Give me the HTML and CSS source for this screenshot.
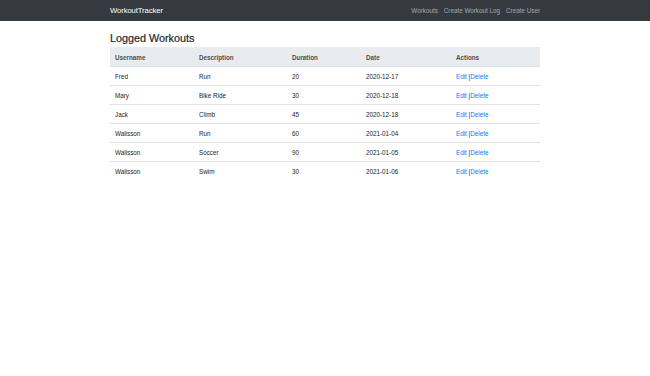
FILE: index.html
```html
<!DOCTYPE html>
<html>
<head>
<meta charset="utf-8">
<link rel="stylesheet" href="styles.css">
</head>
<body>
<nav class="navbar">
  <div class="container nav-inner">
    <a class="brand" href="#">WorkoutTracker</a>
    <ul class="nav-links">
      <li><a href="#">Workouts</a></li>
      <li><a href="#">Create Workout Log</a></li>
      <li><a href="#">Create User</a></li>
    </ul>
  </div>
</nav>
<main class="container content">
  <h3 class="title">Logged Workouts</h3>
  <table class="table">
    <colgroup>
      <col class="c1"><col class="c2"><col class="c3"><col class="c4"><col class="c5">
    </colgroup>
    <thead>
      <tr><th>Username</th><th>Description</th><th>Duration</th><th>Date</th><th>Actions</th></tr>
    </thead>
    <tbody>
      <tr><td>Fred</td><td>Run</td><td>20</td><td>2020-12-17</td><td><a href="#">Edit</a> |<a href="#">Delete</a></td></tr>
      <tr><td>Mary</td><td>Bike Ride</td><td>30</td><td>2020-12-18</td><td><a href="#">Edit</a> |<a href="#">Delete</a></td></tr>
      <tr><td>Jack</td><td>Climb</td><td>45</td><td>2020-12-18</td><td><a href="#">Edit</a> |<a href="#">Delete</a></td></tr>
      <tr><td>Walisson</td><td>Run</td><td>60</td><td>2021-01-04</td><td><a href="#">Edit</a> |<a href="#">Delete</a></td></tr>
      <tr><td>Walisson</td><td>Soccer</td><td>90</td><td>2021-01-05</td><td><a href="#">Edit</a> |<a href="#">Delete</a></td></tr>
      <tr><td>Walisson</td><td>Swim</td><td>30</td><td>2021-01-06</td><td><a href="#">Edit</a> |<a href="#">Delete</a></td></tr>
    </tbody>
  </table>
</main>
</body>
</html>
```
FILE: styles.css
```css
* { box-sizing: border-box; }
html, body { margin: 0; padding: 0; }
body {
  font-family: "Liberation Sans", Arial, sans-serif;
  font-size: 6.3px;
  line-height: 1.5;
  color: #212529;
  background: #fff;
}
.container {
  width: 430px;
  margin: 0 auto;
}
.navbar {
  background: #343a40;
  height: 21px;
}
.nav-inner {
  height: 21px;
  display: flex;
  align-items: center;
  justify-content: space-between;
}
.brand {
  color: #fff;
  text-decoration: none;
  font-size: 7.7px;
  letter-spacing: -0.1px;
}
.nav-links {
  list-style: none;
  margin: 0;
  padding: 0;
  display: flex;
  margin-right: -3px;
}
.nav-links a {
  display: block;
  padding: 0 3px;
  color: rgba(255,255,255,0.55);
  text-decoration: none;
  font-size: 6.3px;
}
.content {
  padding-top: 11px;
}
.title {
  font-size: 10.8px;
  font-weight: 500;
  line-height: 1.2;
  margin: 0 0 2px 0;
  -webkit-text-stroke: 0.2px #212529;
}
.table {
  width: 430px;
  border-collapse: collapse;
  table-layout: fixed;
}
.c1 { width: 84px; }
.c2 { width: 93px; }
.c3 { width: 74px; }
.c4 { width: 90px; }
.c5 { width: 89px; }
.table th, .table td {
  text-align: left;
  padding: 5px 5px 4px 5px;
  line-height: 9px;
  vertical-align: top;
  border-top: 1px solid #dee2e6;
}
.table thead th {
  background: #e9ecef;
  color: #495057;
  font-weight: bold;
  border-top: none;
  border-bottom: 1px solid #dee2e6;
  padding: 6px 5px 4px 5px;
}
.table tbody tr:first-child td { border-top: none; }
.table a {
  color: #007bff;
  text-decoration: none;
}
```
